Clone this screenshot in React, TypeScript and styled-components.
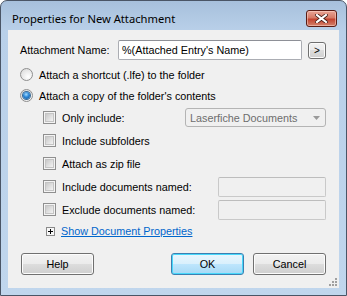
import styled, { createGlobalStyle } from 'styled-components'

const GlobalStyle = createGlobalStyle`
  html, body {
    margin: 0;
    padding: 0;
    background: #ffffff;
  }
  body {
    font-family: "Liberation Sans", Arial, sans-serif;
    font-size: 10.8px;
    color: #000;
  }
`

//window frame
const Window = styled.div`
  width: 347px;
  height: 296px;
  box-sizing: border-box;
  border: 1px solid #4a5566;
  border-radius: 7px 7px 0 0;
  background: linear-gradient(#a7c0dc, #b9d0e9 30px, #c0d6ed);
  padding: 0 7px 7px 7px;
  display: flex;
  flex-direction: column;
`

const TitleBar = styled.div`
  height: 24px;
  padding: 5px 2px 0 4px;
  display: flex;
  align-items: center;
  justify-content: space-between;
`

const Title = styled.span`
  font-family: "Noto Sans", "Open Sans", sans-serif;
  font-size: 11.2px;
  color: #000;
`

const CloseButton = styled.div`
  width: 31px;
  height: 17px;
  box-sizing: border-box;
  border: 1px solid #5a1c14;
  border-radius: 3px;
  background: linear-gradient(#e9a596, #d67a66 45%, #c2432f 55%, #d4826c);
  box-shadow: inset 0 0 0 1px rgba(255, 220, 210, 0.5);
  display: flex;
  align-items: center;
  justify-content: center;
`

const Client = styled.div`
  flex: 1;
  background: #f0f0f0;
  padding: 10px 13px 0 12px;
  position: relative;
`

const Row = styled.div<{ $h: number; $mt?: number; $indent?: number }>`
  display: flex;
  align-items: center;
  height: ${(p) => p.$h}px;
  margin-top: ${(p) => p.$mt ?? 0}px;
  padding-left: ${(p) => p.$indent ?? 0}px;
`

const Label = styled.span<{ $w?: number }>`
  width: ${(p) => (p.$w ? p.$w + 'px' : 'auto')};
  flex: ${(p) => (p.$w ? '0 0 auto' : '1')};
  white-space: nowrap;
`

const TextBox = styled.div<{ $disabled?: boolean; $w: number }>`
  width: ${(p) => p.$w}px;
  height: 20px;
  box-sizing: border-box;
  border: 1px solid ${(p) => (p.$disabled ? '#c9c9c9' : '#abadb3')};
  border-top-color: ${(p) => (p.$disabled ? '#bdbdbd' : '#8e9097')};
  border-radius: 2px;
  background: ${(p) => (p.$disabled ? '#f0f0f0' : '#fff')};
  padding: 0 3px;
  display: flex;
  align-items: center;
`

const SmallButton = styled.div`
  width: 18px;
  height: 17px;
  margin-left: 6px;
  box-sizing: border-box;
  border: 1px solid #707070;
  border-radius: 3px;
  background: linear-gradient(#f2f2f2, #ebebeb 50%, #dddddd 50%, #cfcfcf);
  box-shadow: inset 0 0 0 1px #fcfcfc;
  display: flex;
  align-items: center;
  justify-content: center;
  font-size: 10px;
`

const RadioCircle = styled.span<{ $checked?: boolean }>`
  width: 13px;
  height: 13px;
  box-sizing: border-box;
  border-radius: 50%;
  border: 1px solid #8f8f8f;
  background: radial-gradient(circle at 65% 70%, #ffffff, #e2e2e2 70%, #d0d0d0);
  margin-right: 6px;
  display: flex;
  align-items: center;
  justify-content: center;
  &::after {
    content: '';
    display: ${(p) => (p.$checked ? 'block' : 'none')};
    width: 7px;
    height: 7px;
    border-radius: 50%;
    background: radial-gradient(circle at 45% 35%, #a6dcff, #2a86d6 45%, #0f4f8f);
    box-shadow: 0 0 0 1px #3a6b96;
  }
`

const CheckSquare = styled.span`
  width: 13px;
  height: 13px;
  box-sizing: border-box;
  border: 1px solid #8f8f8f;
  background: #f4f4f4;
  margin-right: 6px;
  display: flex;
  align-items: center;
  justify-content: center;
  &::after {
    content: '';
    width: 9px;
    height: 9px;
    box-sizing: border-box;
    border: 1px solid #c4c4c4;
    background: linear-gradient(135deg, #c9c9c9, #f3f3f3);
  }
`

const DropDown = styled.div`
  width: 141px;
  height: 19px;
  box-sizing: border-box;
  margin-left: auto;
  border: 1px solid #b4b4b4;
  border-radius: 3px;
  background: #f0f0f0;
  color: #6d6d6d;
  padding: 0 5px 0 4px;
  display: flex;
  align-items: center;
  justify-content: space-between;
`

const Field = styled.div`
  margin-left: auto;
`

const Expander = styled.span`
  width: 9px;
  height: 9px;
  margin-left: 3px;
  margin-right: 6px;
  display: flex;
`

const LinkText = styled.a`
  color: #0066cc;
  text-decoration: underline;
  cursor: pointer;
`

const ButtonRow = styled.div`
  display: flex;
  align-items: center;
  margin-top: 12px;
  padding-left: 1px;
`

const PushButton = styled.div<{ $default?: boolean }>`
  width: 73px;
  height: 22px;
  box-sizing: border-box;
  border: 1px solid ${(p) => (p.$default ? '#3c7fb1' : '#707070')};
  border-radius: 3px;
  background: ${(p) =>
    p.$default
      ? 'linear-gradient(#eaf6fd, #d9f0fc 50%, #bee6fd 50%, #a7d9f5)'
      : 'linear-gradient(#f2f2f2, #ebebeb 50%, #dddddd 50%, #cfcfcf)'};
  box-shadow: inset 0 0 0 1px ${(p) => (p.$default ? '#48d8fb' : '#fcfcfc')};
  display: flex;
  align-items: center;
  justify-content: center;
  & + & {
    margin-left: 9px;
  }
`

const Spacer = styled.div`
  flex: 1;
`

const Grip = styled.svg`
  position: absolute;
  right: 2px;
  bottom: 2px;
`

const CheckRow: React.FC<{ label: string; children?: React.ReactNode }> = ({ label, children }) => (
  <Row $h={23} $indent={23}>
    <CheckSquare />
    <Label>{label}</Label>
    {children}
  </Row>
)

const App = () => {
  return (
    <>
      <GlobalStyle />
      <Window>
        <TitleBar>
          <Title>Properties for New Attachment</Title>
          <CloseButton>
            <svg width="13" height="9" viewBox="0 0 13 9">
              <path
                d="M2 1 L11 8 M11 1 L2 8"
                stroke="#3a1510"
                strokeWidth="3.6"
                strokeLinecap="square"
              />
              <path
                d="M2 1 L11 8 M11 1 L2 8"
                stroke="#ffffff"
                strokeWidth="2.2"
                strokeLinecap="square"
              />
            </svg>
          </CloseButton>
        </TitleBar>
        <Client>
          <Row $h={20}>
            <Label $w={98}>Attachment Name:</Label>
            <TextBox $w={184}>%(Attached Entry's Name)</TextBox>
            <SmallButton>&gt;</SmallButton>
          </Row>
          <Row $h={21} $mt={4}>
            <RadioCircle />
            <Label>Attach a shortcut (.lfe) to the folder</Label>
          </Row>
          <Row $h={21}>
            <RadioCircle $checked />
            <Label>Attach a copy of the folder's contents</Label>
          </Row>
          <CheckRow label="Only include:">
            <DropDown>
              <span>Laserfiche Documents</span>
              <svg width="7" height="4" viewBox="0 0 7 4">
                <path d="M0 0 H7 L3.5 4 Z" fill="#9a9a9a" />
              </svg>
            </DropDown>
          </CheckRow>
          <CheckRow label="Include subfolders" />
          <CheckRow label="Attach as zip file" />
          <CheckRow label="Include documents named:">
            <Field>
              <TextBox $w={108} $disabled />
            </Field>
          </CheckRow>
          <CheckRow label="Exclude documents named:">
            <Field>
              <TextBox $w={108} $disabled />
            </Field>
          </CheckRow>
          <Row $h={20} $indent={23}>
            <Expander>
              <svg width="9" height="9" viewBox="0 0 9 9">
                <rect x="0.5" y="0.5" width="8" height="8" fill="#f7f7f7" stroke="#8a8a8a" />
                <path d="M2 4.5 H7 M4.5 2 V7" stroke="#000" strokeWidth="1" />
              </svg>
            </Expander>
            <LinkText>Show Document Properties</LinkText>
          </Row>
          <ButtonRow>
            <PushButton>Help</PushButton>
            <Spacer />
            <PushButton $default>OK</PushButton>
            <PushButton>Cancel</PushButton>
          </ButtonRow>
          <Grip width="8" height="8" viewBox="0 0 8 8">
            <g fill="#a0a0a0">
              <rect x="6" y="0" width="2" height="2" />
              <rect x="3" y="3" width="2" height="2" />
              <rect x="6" y="3" width="2" height="2" />
              <rect x="0" y="6" width="2" height="2" />
              <rect x="3" y="6" width="2" height="2" />
              <rect x="6" y="6" width="2" height="2" />
            </g>
          </Grip>
        </Client>
      </Window>
    </>
  )
}

export default App
